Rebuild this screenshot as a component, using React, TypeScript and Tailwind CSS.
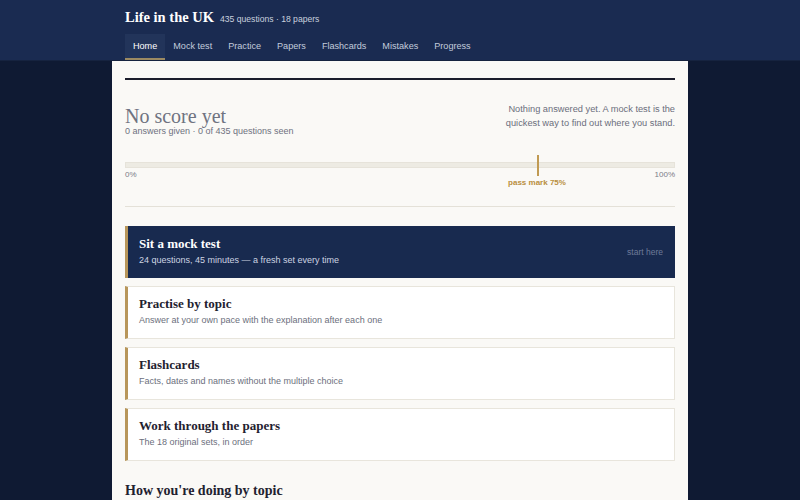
const tabs = ["Home", "Mock test", "Practice", "Papers", "Flashcards", "Mistakes", "Progress"];

const routes = [
  { title: "Sit a mock test", note: "24 questions, 45 minutes — a fresh set every time", primary: true },
  { title: "Practise by topic", note: "Answer at your own pace with the explanation after each one" },
  { title: "Flashcards", note: "Facts, dates and names without the multiple choice" },
  { title: "Work through the papers", note: "The 18 original sets, in order" },
];

const serif = "font-['Georgia','Liberation_Serif',serif]";

function Header() {
  return (
    <header className="h-[61px] bg-[#1a2b51] border-b border-[#16233f]">
      <div className="mx-auto w-[576px] px-[13px]">
        <div className="flex items-baseline gap-[6px] pt-[7px] h-[28px]">
          <span className={`${serif} text-[14.5px] leading-[21px] font-bold text-white`}>Life in the UK</span>
          <span className="text-[8.6px] text-[#c9d0de]">435 questions · 18 papers</span>
        </div>
        <nav className="mt-[6px] flex">
          {tabs.map((t, i) => (
            <a
              key={t}
              className={
                i === 0
                  ? "px-[8px] h-[26px] flex items-center pt-[1px] text-[9.1px] text-white bg-[#22345a] border-b-2 border-[#9c8a62]"
                  : "px-[8px] h-[26px] flex items-center text-[9.1px] text-[#c3cbdc]"
              }
            >
              {t}
            </a>
          ))}
        </nav>
      </div>
    </header>
  );
}

function Score() {
  return (
    <section>
      <div className="h-[2px] bg-[#1b1d2b]" />
      <div className="mt-[26px] flex justify-between">
        <div>
          <div className={`${serif} text-[20px] leading-[20px] text-[#6f7381]`}>No score yet</div>
          <div className="mt-[-1px] text-[9px] leading-[13px] text-[#6e7180]">
            0 answers given · 0 of 435 questions seen
          </div>
        </div>
        <p className="mt-[-4px] w-[190px] text-right text-[9.25px] leading-[14px] text-[#6b6e7c]">
          Nothing answered yet. A mock test is the quickest way to find out where you stand.
        </p>
      </div>
      <div className="relative mt-[24px] h-[6px] bg-[#edebe3] border border-[#e6e3da]">
        <div className="absolute left-[75%] top-[-8px] h-[21px] w-[2px] bg-[#c09a52]" />
        <div className="absolute left-[75%] top-[14px] -translate-x-1/2 whitespace-nowrap text-[8px] font-bold text-[#b98f3e]">
          pass mark 75%
        </div>
      </div>
      <div className="mt-[1px] flex justify-between text-[8px] leading-[12px] text-[#7a7c88]">
        <span>0%</span>
        <span>100%</span>
      </div>
    </section>
  );
}

function RouteCard({ title, note, primary }: { title: string; note: string; primary?: boolean }) {
  return (
    <div
      className={
        primary
          ? "flex h-[52px] pl-[11px] pr-[12px] bg-[#182a4f] border-l-[3px] border-[#b8965a]"
          : "flex h-[53px] pl-[11px] pr-[12px] bg-white border border-[#e8e5dc] border-l-[3px] border-l-[#b8965a]"
      }
    >
      <div className={`flex-1 ${primary ? "pt-[9px]" : "pt-[8px]"}`}>
        <div className={`${serif} text-[13px] leading-[18px] font-bold ${primary ? "text-white" : "text-[#1f2230]"}`}>
          {title}
        </div>
        <div className={`mt-[1px] text-[9px] leading-[13px] ${primary ? "text-[#cdd4e2]" : "text-[#6c6f7d]"}`}>{note}</div>
      </div>
      {primary && <span className="self-center text-[8.5px] text-[#6e7a98]">start here</span>}
    </div>
  );
}

export default function App() {
  return (
    <div className="min-h-screen bg-[#0f1a33] font-['Liberation_Sans','Helvetica',sans-serif]">
      <Header />
      <main className="mx-auto w-[576px] min-h-[439px] bg-[#faf9f6] px-[13px] pt-[17px]">
        <Score />
        <div className="mt-[25px] h-px bg-[#e4e1d8]" />
        <div className="mt-[19px] flex flex-col gap-[8px]">
          {routes.map((r) => (
            <RouteCard key={r.title} {...r} />
          ))}
        </div>
        <h2 className={`${serif} mt-[20px] text-[14px] leading-[20px] font-bold text-[#1f2230]`}>
          How you're doing by topic
        </h2>
      </main>
    </div>
  );
}
